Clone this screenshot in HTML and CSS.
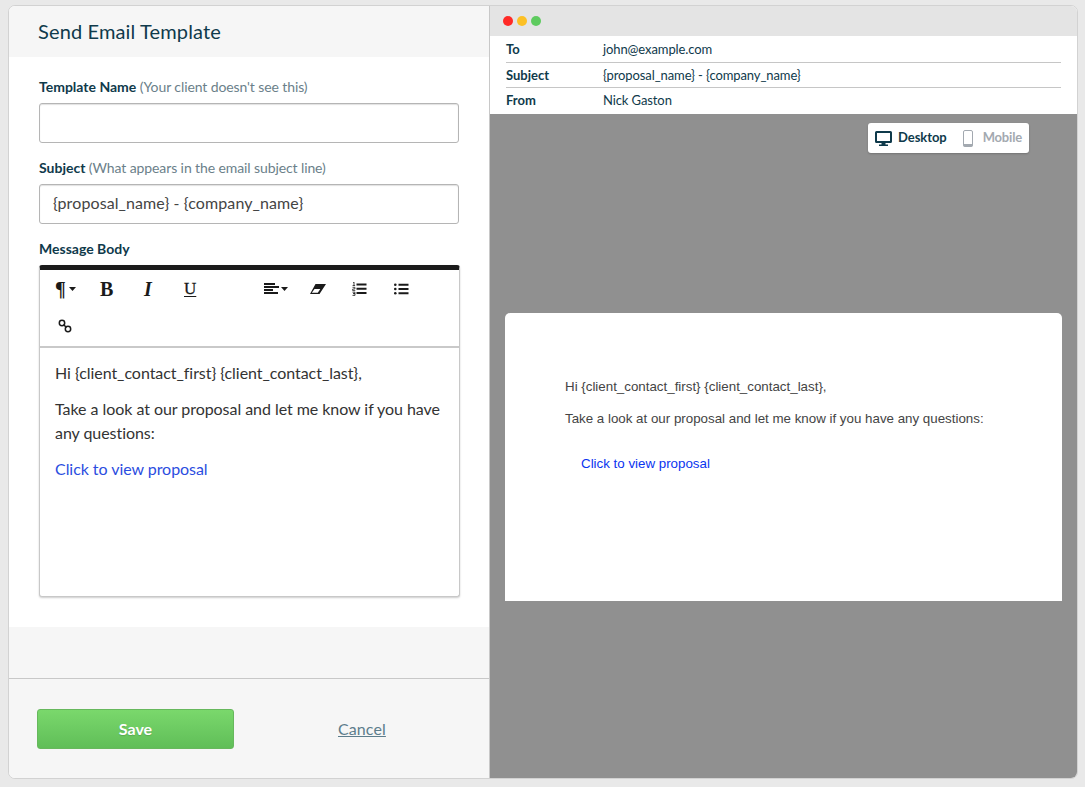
FILE: index.html
```html
<!DOCTYPE html>
<html lang="en">
<head>
<meta charset="utf-8">
<title>Send Email Template</title>
<link rel="stylesheet" href="styles.css">
</head>
<body>
<div class="frame">
  <section class="editor">
    <header class="editor-head"><h1>Send Email Template</h1></header>
    <div class="form">
      <div class="field">
        <label class="label"><b>Template Name</b> (Your client doesn't see this)</label>
        <div class="input"></div>
      </div>
      <div class="field">
        <label class="label"><b>Subject</b> (What appears in the email subject line)</label>
        <div class="input">{proposal_name} - {company_name}</div>
      </div>
      <div class="label body-label"><b>Message Body</b></div>
      <div class="rte">
        <div class="toolbar">
          <div class="tool-row">
            <span class="tool t-para"><span class="para">¶</span><svg class="caret" width="7" height="4" viewBox="0 0 7 4"><path d="M0 0h7L3.5 4z"/></svg></span>
            <span class="tool t-b serif"><b>B</b></span>
            <span class="tool t-i serif"><b><i>I</i></b></span>
            <span class="tool t-u serif"><span class="under">U</span></span>
            <span class="tool t-align">
              <svg width="15" height="11" viewBox="0 0 15 11"><path d="M0 0h11v2H0zM0 3h15v2H0zM0 6h9v2H0zM0 9h14v2H0z"/></svg><svg class="caret" width="7" height="4" viewBox="0 0 7 4"><path d="M0 0h7L3.5 4z"/></svg>
            </span>
            <span class="tool t-eraser">
              <svg width="16" height="10" viewBox="0 0 16 10"><path d="M5.500 0H16L9.500 10H0zM4.500 5 1.800 8.800H7.800L10.300 5z" fill-rule="evenodd"/></svg>
            </span>
            <span class="tool t-ol">
              <svg width="15" height="14" viewBox="0 0 15 14"><path d="M4.500 1.500h10v2h-10zM4.500 5.700h10v2h-10zM4.500 9.900h10v2h-10z"/><path d="M1 .5 2 0v3.400M.6 3.500h2.500M.5 5.300h2.400V7H.7v1.600h2.600M.5 10.200h2.500v1.400H1.200 3V13.400H.5" fill="none" stroke="#1a1a1a" stroke-width=".8"/></svg>
            </span>
            <span class="tool t-ul">
              <svg width="15" height="12" viewBox="0 0 15 12"><circle cx="1.300" cy="1.700" r="1.300"/><circle cx="1.300" cy="6" r="1.300"/><circle cx="1.300" cy="10.300" r="1.300"/><path d="M4.500.7h10v2h-10zM4.500 5h10v2h-10zM4.500 9.300h10v2h-10z"/></svg>
            </span>
          </div>
          <div class="tool-row">
            <span class="tool t-link">
              <svg width="14" height="14" viewBox="0 0 14 14"><g fill="none" stroke="#1a1a1a" stroke-width="1.500"><circle cx="4" cy="4" r="2.700"/><circle cx="10" cy="10" r="2.700"/><path d="M5.500 5.500l3 3"/></g></svg>
            </span>
          </div>
        </div>
        <div class="rte-body">
          <p>Hi {client_contact_first} {client_contact_last},</p>
          <p>Take a look at our proposal and let me know if you have any questions:</p>
          <p><a class="rte-link">Click to view proposal</a></p>
        </div>
      </div>
    </div>
    <div class="spacer"></div>
    <footer class="actions">
      <button class="save">Save</button>
      <a class="cancel">Cancel</a>
    </footer>
  </section>
  <section class="preview">
    <div class="chrome">
      <span class="dot red"></span><span class="dot yellow"></span><span class="dot green"></span>
    </div>
    <div class="meta">
      <div class="meta-row"><b>To</b><span>john@example.com</span></div>
      <div class="meta-row"><b>Subject</b><span>{proposal_name} - {company_name}</span></div>
      <div class="meta-row"><b>From</b><span>Nick Gaston</span></div>
    </div>
    <div class="stage">
      <div class="toggle">
        <span class="opt active">
          <svg width="17" height="15" viewBox="0 0 17 15"><path fill="#0f3a4b" d="M1.500 0h14A1.500 1.500 0 0 1 17 1.500v9a1.500 1.500 0 0 1-1.500 1.500H10.500v1.500H13V15H4v-1.500h2.500V12h-5A1.500 1.500 0 0 1 0 10.500v-9A1.500 1.500 0 0 1 1.500 0zM2 2v8h13V2z" fill-rule="evenodd"/></svg>
          <span>Desktop</span>
        </span>
        <span class="opt muted">
          <svg width="10" height="17" viewBox="0 0 10 17"><rect x=".5" y=".5" width="9" height="16" rx="1.500" fill="none" stroke="#a3a9b0"/><rect x=".5" y="14" width="9" height="2.500" fill="#a3a9b0"/></svg>
          <span>Mobile</span>
        </span>
      </div>
      <article class="card">
        <p>Hi {client_contact_first} {client_contact_last},</p>
        <p>Take a look at our proposal and let me know if you have any questions:</p>
        <p class="card-link"><a>Click to view proposal</a></p>
      </article>
    </div>
  </section>
</div>
</body>
</html>
```
FILE: styles.css
```css
* { box-sizing: border-box; }
html, body { margin: 0; height: 100%; }
body {
  background: #e9e9e9;
  padding: 5px 7px 8px 8px;
  font-family: Lato, "Open Sans", sans-serif;
  color: #0f3a4b;
}
.frame {
  display: flex;
  height: 774px;
  border: 1px solid #d2d2d2;
  border-radius: 7px;
  overflow: hidden;
  background: #fff;
}
.editor {
  width: 481px;
  flex: none;
  display: flex;
  flex-direction: column;
  border-right: 1px solid #c8c8c8;
  background: #f6f6f6;
}
.editor-head { height: 51px; padding: 12px 29px 0; }
.editor-head h1 { margin: 0; font-size: 20px; line-height: 26px; font-weight: 400; letter-spacing: .14px; color: #0f3a4b; }
.form { background: #fff; height: 570px; padding: 21px 30px 0; }
.field { margin-bottom: 16px; }
.label { display: block; font-size: 14px; line-height: 18px; color: #6b7f8a; letter-spacing: -.1px; }
.label b { color: #0f3a4b; font-weight: 700; letter-spacing: 0; }
.input {
  height: 40px;
  margin-top: 7px;
  border: 1px solid #b5b5b5;
  border-radius: 3px;
  box-shadow: inset 0 1px 1px rgba(0,0,0,.12);
  padding: 0 13px;
  font-size: 16px;
  letter-spacing: .1px;
  line-height: 36px;
  color: #444;
  background: #fff;
}
.body-label { margin-top: 0; }
.rte {
  width: 421px;
  height: 332px;
  margin-top: 7px;
  border: 1px solid #c8c8c8;
  border-top: 5px solid #1b1b1b;
  border-radius: 3px;
  box-shadow: 0 1px 2px rgba(0,0,0,.2);
  background: #fff;
}
.toolbar { height: 78px; border-bottom: 2px solid #c9c9c9; }
.tool-row { display: flex; height: 37px; align-items: center; }
.tool { display: flex; align-items: center; fill: #1a1a1a; color: #1a1a1a; line-height: 1; flex: none; }
.serif { font-family: "Liberation Serif", serif; font-size: 20px; }
.caret { margin-left: 2px; }
.para { font-family: "Liberation Serif", serif; font-weight: 700; font-size: 20px; }
.t-para .caret { margin-left: 3px; }
.under { text-decoration: underline; text-decoration-thickness: 1px; text-underline-offset: 2px; font-size: 17px; font-weight: 400; -webkit-text-stroke: .3px #1a1a1a; }
.t-para { margin-left: 15px; width: 45px; }
.t-b { width: 44px; }
.t-i { width: 40px; }
.t-u { width: 80px; }
.t-align { width: 46px; }
.t-eraser { width: 42px; }
.t-ol { width: 42px; }
.t-link { margin-left: 18px; }
.rte-body { padding: 13px 8px 0 15px; font-size: 16px; line-height: 24px; color: #333; letter-spacing: -.05px; }
.rte-body p { margin: 0 0 12px; }
.rte-link { color: #2b4de0; }
.spacer { height: 51px; }
.actions {
  flex: 1;
  border-top: 1px solid #c8c8c8;
  padding: 30px 0 0 28px;
  display: flex;
  align-items: flex-start;
}
.save {
  width: 197px;
  height: 40px;
  border: 1px solid #67b85d;
  border-radius: 3px;
  background: linear-gradient(#7ad86c, #60be58);
  color: #fff;
  font: 700 16px Lato, sans-serif;
  text-shadow: 0 1px 1px rgba(0,0,0,.15);
  padding: 0 0 2px;
}
.cancel { margin: 10px 0 0 104px; font-size: 16px; line-height: 20px; letter-spacing: .1px; color: #5d7d8c; text-decoration: underline; }
.preview { flex: 1; display: flex; flex-direction: column; min-width: 0; }
.chrome { height: 30px; background: #e4e4e4; display: flex; align-items: center; gap: 4px; padding-left: 13px; }
.dot { width: 10px; height: 10px; border-radius: 50%; }
.red { background: #ff2a26; }
.yellow { background: #fcc025; }
.green { background: #5ecb5f; }
.meta { background: #fff; height: 78px; padding: 0 16px; }
.meta-row { display: flex; height: 25px; align-items: center; font-size: 13px; letter-spacing: -.1px; border-bottom: 1px solid #c6c6c6; color: #0f3a4b; }
.meta-row:first-child { height: 27px; }
.meta-row:last-child { border-bottom: 0; height: 26px; padding-bottom: 2px; }
.meta-row b { width: 97px; flex: none; font-weight: 700; letter-spacing: 0; }
.stage { flex: 1; background: #909090; padding-top: 9px; display: flex; flex-direction: column; }
.toggle {
  align-self: flex-end;
  margin-right: 48px;
  width: 161px;
  height: 30px;
  display: flex;
  align-items: center;
  background: #fff;
  border-radius: 3px;
  box-shadow: 0 1px 2px rgba(0,0,0,.2);
  padding-left: 7px;
  font-size: 13px;
  font-weight: 700;
  letter-spacing: -.05px;
}
.opt { display: flex; align-items: center; gap: 6px; color: #0f3a4b; }
.opt span { padding-bottom: 2px; }
.opt.muted { color: #a3a9b0; margin-left: 16px; gap: 10px; letter-spacing: -.2px; }
.card {
  width: 557px;
  height: 288px;
  margin: 160px 0 0 15px;
  background: #fff;
  border-radius: 5px 5px 0 0;
  padding: 64px 60px 0;
  font: 13.33px/20px "Liberation Sans", Arial, sans-serif;
  color: #444;
}
.card p { margin: 0 0 12px; }
.card .card-link { margin-top: 25px; padding-left: 16px; }
.card-link a { color: #0a35f0; }
```
